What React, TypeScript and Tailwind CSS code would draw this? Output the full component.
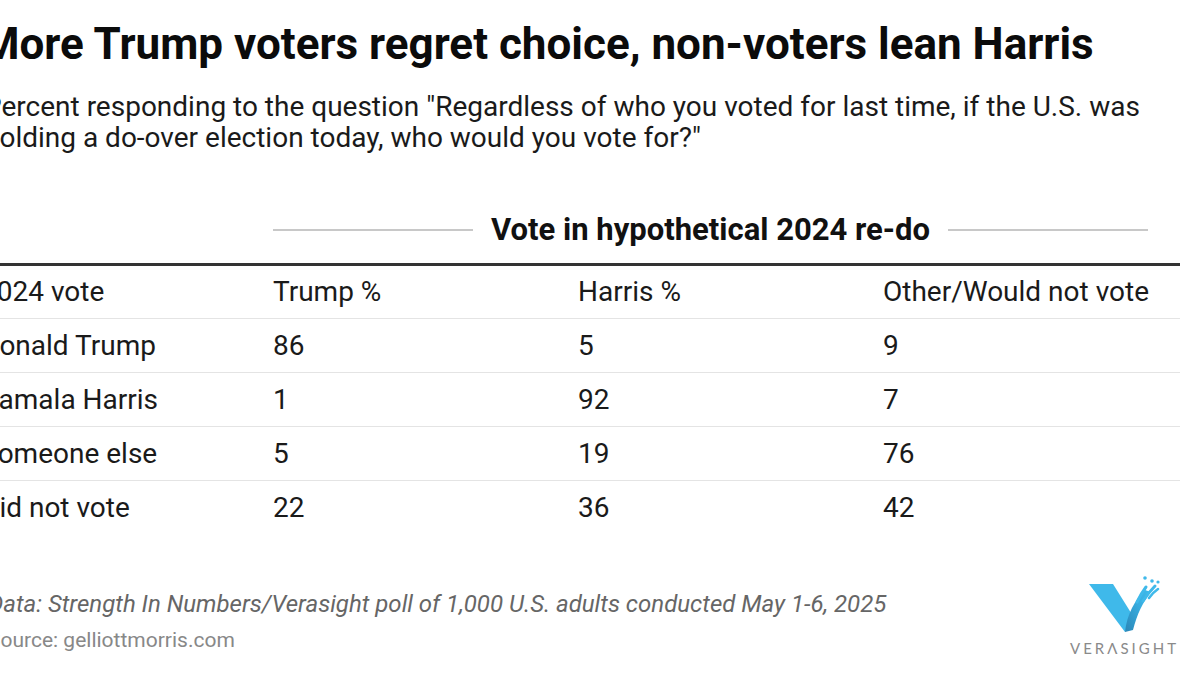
import React from 'react';

type Row = { label: string; trump: number; harris: number; other: number };

const rows: Row[] = [
  { label: 'Donald Trump', trump: 86, harris: 5, other: 9 },
  { label: 'Kamala Harris', trump: 1, harris: 92, other: 7 },
  { label: 'Someone else', trump: 5, harris: 19, other: 76 },
  { label: 'Did not vote', trump: 22, harris: 36, other: 42 },
];

const VerasightLogo: React.FC = () => (
  <div className="flex flex-col items-center">
    <svg width="80" height="60" viewBox="0 0 80 60">
      <defs>
        <linearGradient id="vr" x1="0" y1="1" x2="1" y2="0">
          <stop offset="0" stopColor="#2a86b6" />
          <stop offset="0.6" stopColor="#38ade0" />
          <stop offset="1" stopColor="#3fbaea" />
        </linearGradient>
      </defs>
      {/* left arm */}
      <path d="M4 10 L28 10 L48 42 L40 58 Z" fill="#3fb9ea" />
      {/* right arm */}
      <path d="M40 58 C42 40 50 26 60 16 L66 18 C58 28 52 40 48 56 Z" fill="url(#vr)" />
      {/* streaks */}
      <path d="M52 28 C55 22 58 17 61 13" stroke="#3fb9ea" strokeWidth="3" strokeLinecap="round" fill="none" />
      <path d="M58 27 C62 21 66 16 70 12" stroke="#3fb9ea" strokeWidth="3" strokeLinecap="round" fill="none" />
      <path d="M64 24 C67 20 70 17 73 15" stroke="#3fb9ea" strokeWidth="2.6" strokeLinecap="round" fill="none" />
      <circle cx="60" cy="4" r="1.8" fill="#3fb9ea" />
      <circle cx="67" cy="7" r="1.8" fill="#3fb9ea" />
      <circle cx="73" cy="8" r="1.6" fill="#3fb9ea" />
    </svg>
    <div
      className="mt-[7px] text-[15px] tracking-[3px] text-[#8a8a8a] leading-none"
      style={{ fontFamily: 'Lato, sans-serif' }}
    >
      VERΛSIGHT
    </div>
  </div>
);

export default function App() {
  return (
    <div
      className="w-[1200px] h-[674px] bg-white overflow-hidden text-[#1a1a1a]"
      style={{ fontFamily: 'Roboto, "Liberation Sans", sans-serif' }}
    >
      <div className="ml-[-16px] w-[1196px]">
        <h1 className="pt-[18px] ml-[-3px] text-[44px] font-bold leading-[52px] text-[#0b0b0b] whitespace-nowrap">
          More Trump voters regret choice, non-voters lean Harris
        </h1>
        <p className="mt-[21px] text-[28px] leading-[31px] pr-[30px]">
          Percent responding to the question "Regardless of who you voted for last time, if the U.S. was holding a do-over election today, who would you vote for?"
        </p>

        <div className="mt-[57px]">
          {/* spanner header */}
          <div className="grid grid-cols-[289px_1fr] items-center h-[40px]">
            <div />
            <div className="flex items-center gap-[18px] pr-[32px]">
              <div className="flex-1 h-[2px] bg-[#c8c8c8]" />
              <div className="text-[31px] leading-[40px] font-bold text-[#111]">Vote in hypothetical 2024 re-do</div>
              <div className="flex-1 h-[2px] bg-[#c8c8c8]" />
            </div>
          </div>
          <div className="mt-[13px] h-[3px] bg-[#333]" />
          <div className="grid grid-cols-[289px_305px_305px_1fr] h-[53px] items-center text-[28px] border-b border-[#e4e4e4]">
            <div className="ml-[-3px]">2024 vote</div>
            <div>Trump %</div>
            <div>Harris %</div>
            <div>Other/Would not vote</div>
          </div>
          {rows.map((r) => (
            <div
              key={r.label}
              className="grid grid-cols-[289px_305px_305px_1fr] h-[54px] items-center text-[28px] border-b border-[#e4e4e4] last:border-b-0"
            >
              <div className="ml-[-3px]">{r.label}</div>
              <div>{r.trump}</div>
              <div>{r.harris}</div>
              <div>{r.other}</div>
            </div>
          ))}
        </div>
      </div>

      <div className="mt-[55px] flex items-start justify-between ml-[-12px] pr-[21px]">
        <div>
          <div className="text-[24px] italic text-[#666] leading-[28px] whitespace-nowrap">
            Data: Strength In Numbers/Verasight poll of 1,000 U.S. adults conducted May 1-6, 2025
          </div>
          <div className="mt-[9px] text-[21px] text-[#888] leading-[26px]">Source: gelliottmorris.com</div>
        </div>
        <div className="mt-[-16px]">
          <VerasightLogo />
        </div>
      </div>
    </div>
  );
}
